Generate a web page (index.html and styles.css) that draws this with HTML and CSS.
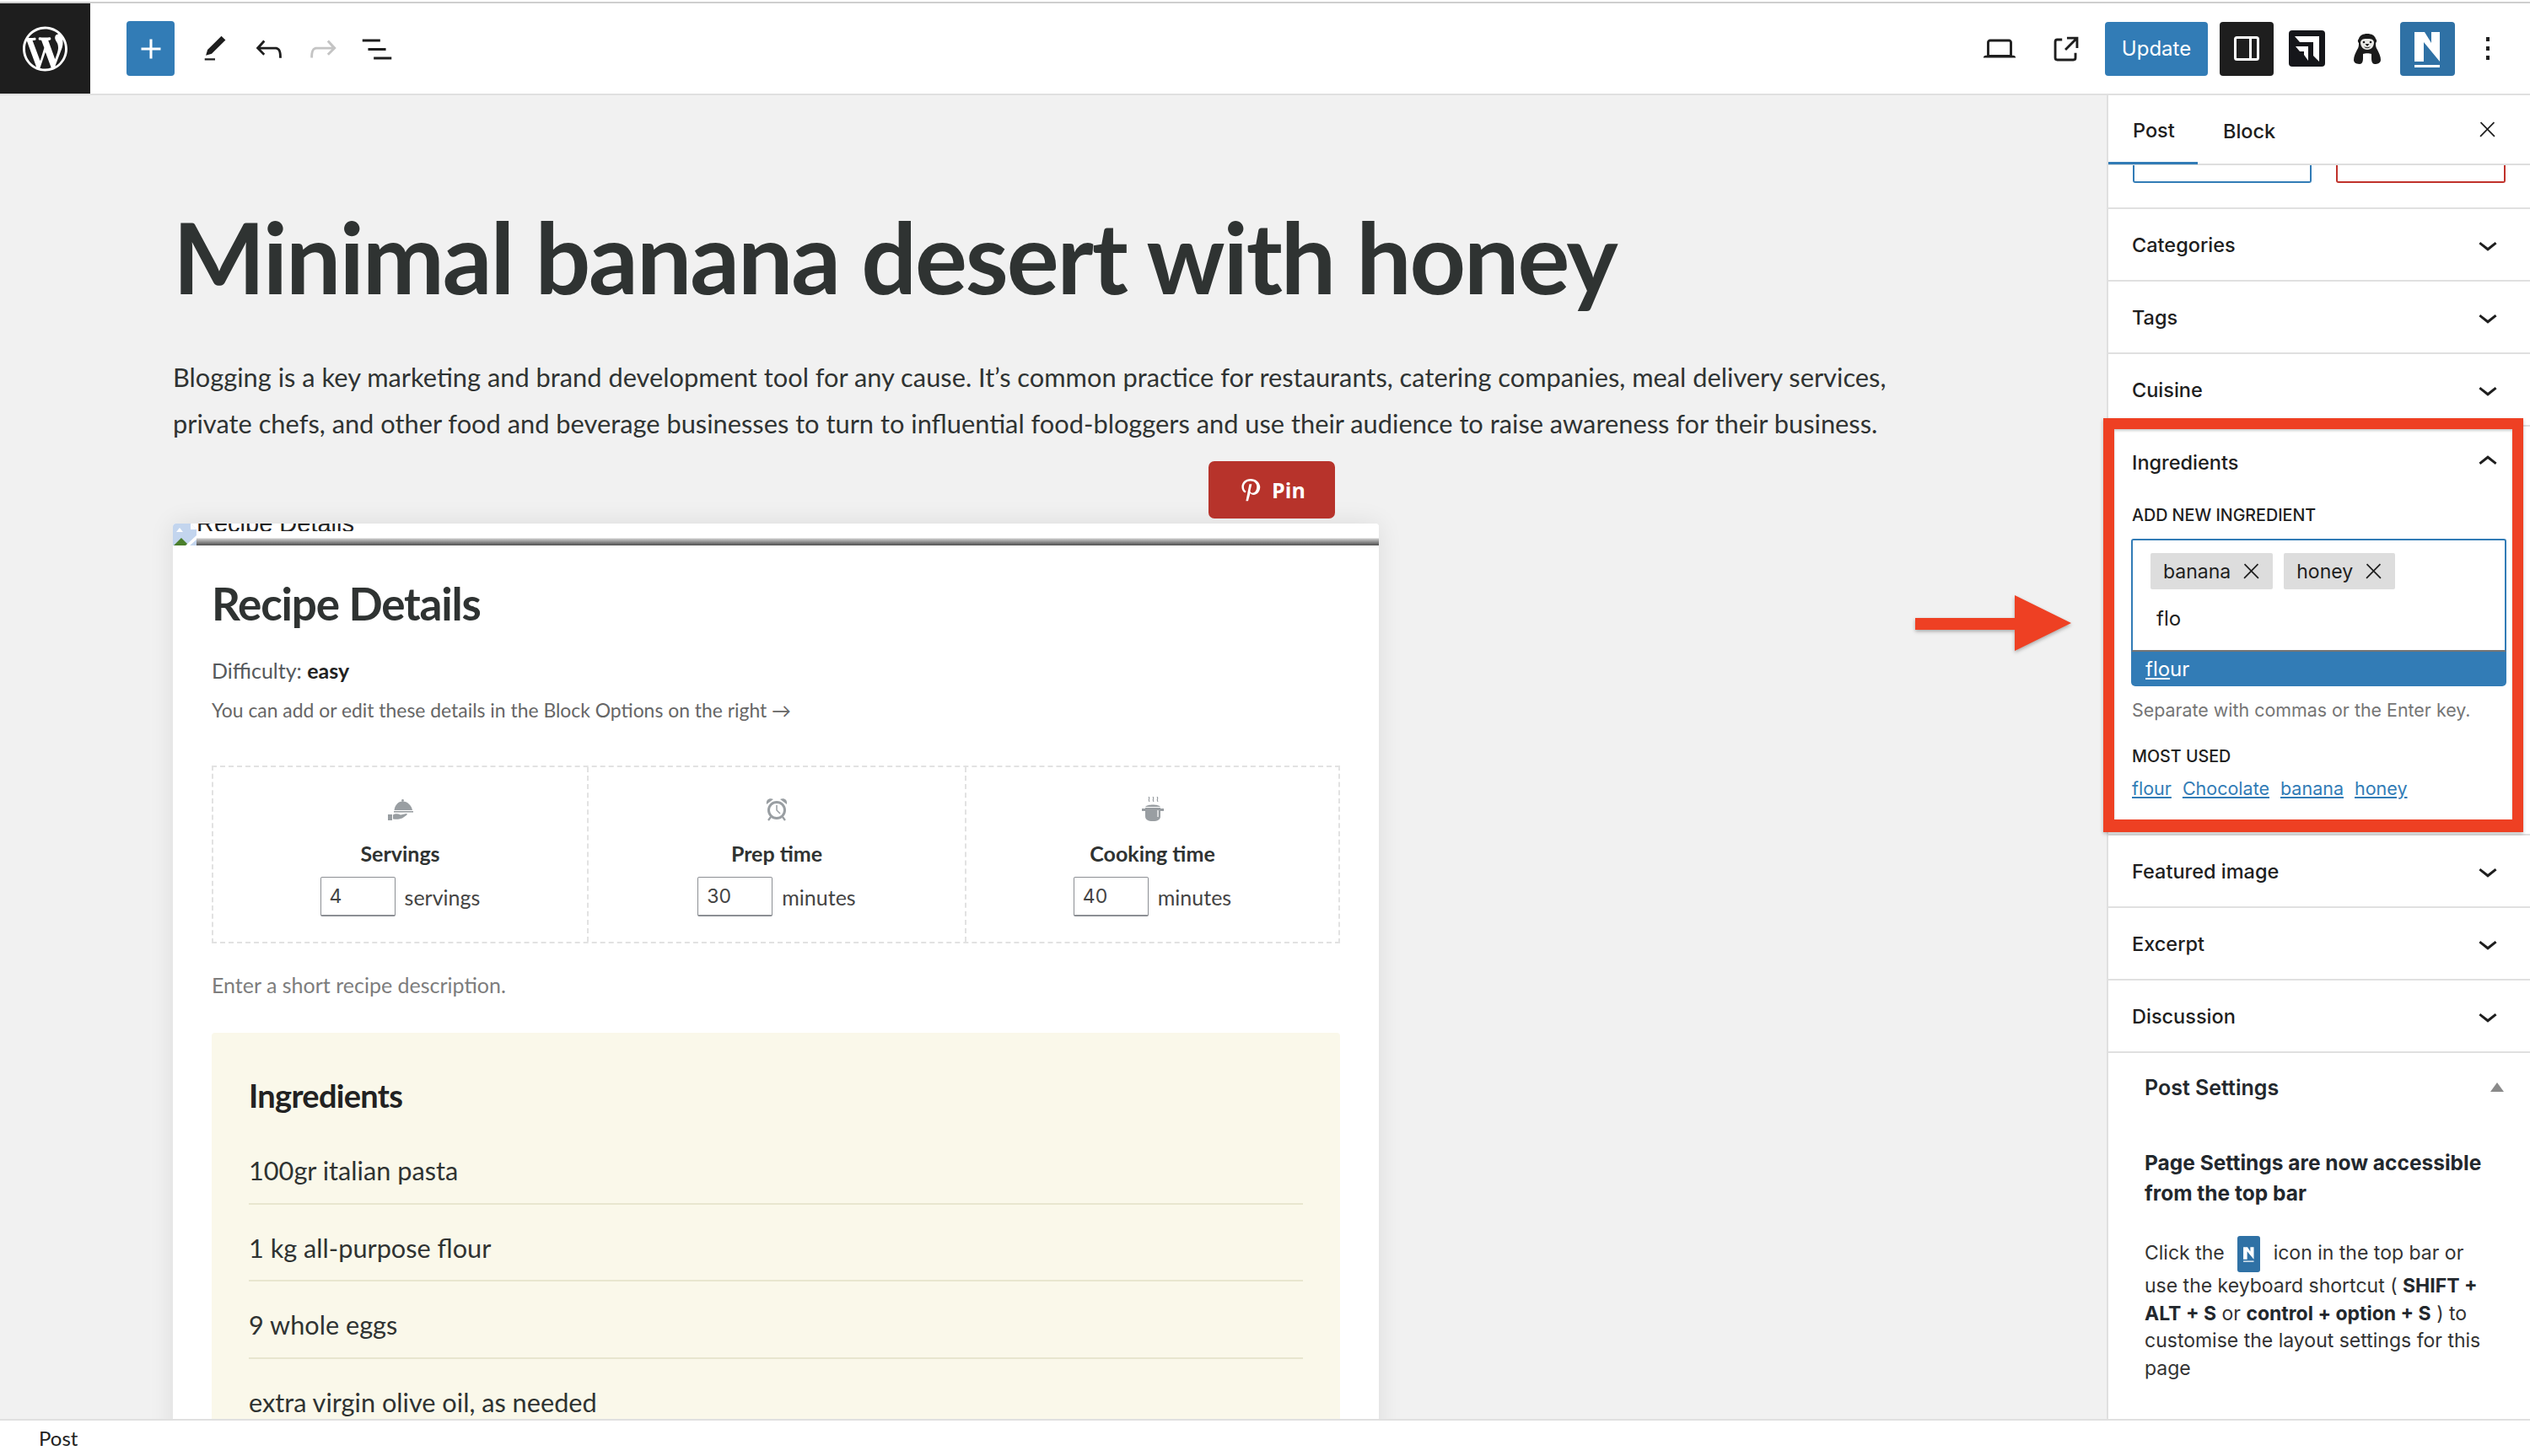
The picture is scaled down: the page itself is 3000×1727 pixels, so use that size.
FILE: index.html
```html
<!DOCTYPE html>
<html lang="en">
<head>
    <meta charset="UTF-8">
    <title>Edit Post - Minimal banana desert with honey</title>
    <link rel="stylesheet" href="styles.css">
</head>
<body>
    <svg class="sprite" xmlns="http://www.w3.org/2000/svg">
        <symbol id="i-plus" viewBox="0 0 24 24"><path d="M18 11.2h-5.2V6h-1.6v5.2H6v1.6h5.2V18h1.6v-5.2H18z"/></symbol>
        <symbol id="i-edit" viewBox="-3 -3 30 30"><path d="M20.1 5.1L16.9 2 6.2 12.7l-1.3 4.4 4.5-1.3L20.1 5.1zM4 20.8h8v-1.5H4v1.5z"/></symbol>
        <symbol id="i-undo" viewBox="0 0 24 24"><path d="M18.3 11.7c-.6-.6-1.4-.9-2.3-.9H6.7l2.9-3.3-1.1-1-4.5 5L8.5 16l1-1-2.7-2.7H16c.5 0 .9.2 1.3.5 1 1 1 3.4 1 4.5v.3h1.5v-.2c0-1.5 0-4.3-1.5-5.7z"/></symbol>
        <symbol id="i-redo" viewBox="0 0 24 24"><path d="M15.6 6.5l-1.1 1 2.9 3.3H8c-.9 0-1.7.3-2.3.9-1.4 1.5-1.4 4.2-1.4 5.6v.2h1.5v-.3c0-1.1 0-3.5 1-4.5.3-.3.7-.5 1.3-.5h9.2L14.5 15l1.1 1.1 4.6-4.6-4.6-5z"/></symbol>
        <symbol id="i-list" viewBox="0 0 24 24"><path d="M3 6h11v1.5H3V6zm3.5 5.5h11V13h-11v-1.5zM21 17H10v1.5h11V17z"/></symbol>
        <symbol id="i-laptop" viewBox="0 0 24 24"><path d="M20.5 16h-.7V8c0-1.1-.9-2-2-2H6.2c-1.1 0-2 .9-2 2v8h-.7c-.8 0-1.5.7-1.5 1.5h20c0-.8-.7-1.5-1.5-1.5zM5.7 8c0-.3.2-.5.5-.5h11.6c.3 0 .5.2.5.5v7.6H5.7V8z"/></symbol>
        <symbol id="i-external" viewBox="0 0 24 24"><path d="M19.5 4.5h-7V6h4.44l-5.97 5.97 1.06 1.06L18 7.06v4.44h1.5v-7Zm-13 1a2 2 0 0 0-2 2v10a2 2 0 0 0 2 2h10a2 2 0 0 0 2-2v-3H17v3a.5.5 0 0 1-.5.5h-10a.5.5 0 0 1-.5-.5v-10a.5.5 0 0 1 .5-.5h3V5.5h-3Z"/></symbol>
        <symbol id="i-close" viewBox="0 0 24 24"><path d="M13 11.8l6.1-6.3-1-1-6.1 6.2-6.1-6.2-1 1 6.1 6.3-6.5 6.7 1 1 6.5-6.6 6.5 6.6 1-1z"/></symbol>
        <symbol id="i-down" viewBox="0 0 24 24"><path d="M17.5 11.6L12 16l-5.5-4.4.9-1.2L12 14l4.5-3.6 1 1.2z"/></symbol>
        <symbol id="i-up" viewBox="0 0 24 24"><path d="M6.5 12.4L12 8l5.5 4.4-.9 1.2L12 10l-4.5 3.6-1-1.2z"/></symbol>
        <symbol id="i-n" viewBox="0 0 65 64"><path d="M17 12H29L37 25V12H47V47L28 24V47H17ZM17 51H47V54H17Z"/></symbol>
    </svg>

    <div class="topline"></div>
    <header class="topbar">
        <a class="wp-logo" href="#">
            <svg viewBox="0 0 20 20"><path d="M20 10c0-5.51-4.49-10-10-10C4.48 0 0 4.49 0 10c0 5.52 4.48 10 10 10 5.51 0 10-4.48 10-10zM7.78 15.37L4.37 6.22c.55-.02 1.17-.08 1.17-.08.5-.06.44-1.13-.06-1.11 0 0-1.45.11-2.37.11-.18 0-.37 0-.58-.01C4.12 2.69 6.87 1.11 10 1.11c2.33 0 4.45.87 6.05 2.34-.68-.11-1.65.39-1.65 1.58 0 .74.45 1.36.9 2.1.35.61.55 1.36.55 2.46 0 1.49-1.4 5-1.4 5l-3.03-8.37c.54-.02.82-.17.82-.17.5-.05.44-1.25-.06-1.22 0 0-1.44.12-2.38.12-.87 0-2.33-.12-2.33-.12-.5-.03-.56 1.2-.06 1.22l.92.08 1.26 3.41zM17.41 10c.24-.64.74-1.87.43-4.25.7 1.29 1.05 2.71 1.05 4.25 0 3.29-1.73 6.24-4.4 7.78.97-2.59 1.94-5.2 2.92-7.78zM6.1 18.09C3.12 16.65 1.11 13.53 1.11 10c0-1.3.23-2.48.72-3.59C3.25 10.3 4.67 14.2 6.1 18.09zm4.03-6.63l2.58 6.98c-.86.29-1.76.45-2.71.45-.79 0-1.57-.11-2.29-.33.81-2.38 1.62-4.74 2.42-7.1z"/></svg>
        </a>
        <div class="tools-left">
            <button class="add-btn"><svg class="icon"><use href="#i-plus"/></svg></button>
            <svg class="icon tool"><use href="#i-edit"/></svg>
            <svg class="icon tool"><use href="#i-undo"/></svg>
            <svg class="icon tool muted"><use href="#i-redo"/></svg>
            <svg class="icon tool"><use href="#i-list"/></svg>
        </div>
        <div class="tools-right">
            <svg class="icon tool"><use href="#i-laptop"/></svg>
            <svg class="icon tool"><use href="#i-external"/></svg>
            <button class="update-btn">Update</button>
            <button class="panel-btn">
                <svg viewBox="0 0 30 30"><rect x="1.5" y="1.5" width="27" height="26" rx="2" fill="none" stroke="#fff" stroke-width="3"/><rect x="18" y="2" width="3" height="26" fill="#fff"/></svg>
            </button>
            <div class="logo-arrow">
                <svg viewBox="0 0 43 43"><path d="M7 7H36V37L29 30V14H13ZM8 19H23V36L18 29V25H13Z" fill="#fff"/></svg>
            </div>
            <svg class="logo-penguin" viewBox="0 0 32 36">
                <path d="M16 0C11 0 7 2 6 6C4 8 5 10 6 11C6 14 6 16 4 19C2 23 0 27 0 31C0 35 4 36 7 36C10 36 11 33 11 29V24C13 23 19 23 21 24V29C21 33 22 36 25 36C28 36 32 35 32 31C32 27 30 23 28 19C26 16 26 14 26 11C27 10 28 8 26 6C25 2 21 0 16 0Z" fill="#1b1b1b"/>
                <path d="M16 6C12 6 9 6 8 10C8 15 11 19 16 19C21 19 24 15 24 10C23 6 20 6 16 6Z" fill="#e9e9e6"/>
                <circle cx="12" cy="10" r="1.300" fill="#1b1b1b"/><circle cx="20" cy="10" r="1.300" fill="#1b1b1b"/>
                <path d="M13.500 12H18.500L16 15ZM12 15C14 18 18 18 20 15C18 16.500 14 16.500 12 15Z" fill="#1b1b1b"/>
            </svg>
            <div class="logo-n"><svg viewBox="0 0 65 64"><use href="#i-n"/></svg></div>
            <div class="more-dots"><span></span><span></span><span></span></div>
        </div>
    </header>

    <div class="workspace">
        <main class="editor">
            <h1 class="post-title">Minimal banana desert with honey</h1>
            <p class="post-intro">Blogging is a key marketing and brand development tool for any cause. It’s common practice for restaurants, catering companies, meal delivery services, private chefs, and other food and beverage businesses to turn to influential food-bloggers and use their audience to raise awareness for their business.</p>

            <div class="pin-row">
                <a class="pin-btn" href="#">
                    <svg viewBox="0 0 24 24"><path d="M12 1.5C6.8 1.5 3.5 5 3.5 9.2c0 2.6 1.2 4.7 3.2 5.6l1-1.5c-1.5-.9-2.2-2.300-2.200-4.100 0-3 2.500-5.700 6.400-5.700 3.600 0 5.900 2.300 5.900 5.400 0 3.500-1.800 6-4.200 6-1.300 0-2.100-1-2-2.200l1.500-6.200H10.700L7.500 22.500h2.100l2-7.300c.8 1 2 1.500 3.100 1.500 3.900 0 6.300-3.500 6.300-7.700C20.500 4.800 17 1.500 12 1.500z" fill="#fff"/></svg>
                    Pin
                </a>
            </div>

            <article class="recipe-card">
                <div class="broken-image">
                    <svg class="broken-icon" viewBox="0 0 28 27">
                        <path d="M1 0H21L28 7V27H0V2Z" fill="#c3d5ee"/>
                        <path d="M0 27L10 17L20 27Z" fill="#4a7f2c"/>
                        <path d="M21 0L28 7H21Z" fill="#fff"/>
                        <path d="M28 14L14 27H19L28 19Z" fill="#fff"/>
                        <path d="M8 5L12 10H4Z" fill="#fff"/>
                    </svg>
                    <span class="broken-alt">Recipe Details</span>
                </div>
                <div class="recipe-body">
                    <h2 class="recipe-title">Recipe Details</h2>
                    <p class="difficulty">Difficulty: <strong>easy</strong></p>
                    <p class="hint">You can add or edit these details in the Block Options on the right →</p>

                    <div class="facts">
                        <div class="fact">
                            <svg class="fact-icon" viewBox="0 0 30 30">
                                <circle cx="17.500" cy="4.500" r="1.400"/>
                                <path d="M7.500 16C8 10.500 12 5.500 17.500 5.500C23 5.500 28 10.500 29 16Z"/>
                                <path d="M7 17H30V18.600H7Z"/>
                                <path d="M0 21H5V28H0ZM6 21.500C9 19.500 12 20.500 15 21.500L22 20C23 20 23 21 22 22L17 25.500C13 27 10 27 6 26.500Z"/>
                            </svg>
                            <div class="fact-label">Servings</div>
                            <div class="fact-input"><input class="num-input" type="text" value="4"><span>servings</span></div>
                        </div>
                        <div class="fact">
                            <svg class="fact-icon" viewBox="0 0 30 30">
                                <circle cx="15" cy="16" r="9.500" fill="none" stroke="#999ea2" stroke-width="3"/>
                                <path d="M3 9C2 4 6 1 11 3ZM27 9C28 4 24 1 19 3Z"/>
                                <path d="M15 10V16L19 20" fill="none" stroke="#999ea2" stroke-width="1.500"/>
                                <path d="M8 24L5 28M22 24L25 28" fill="none" stroke="#999ea2" stroke-width="2.200"/>
                            </svg>
                            <div class="fact-label">Prep time</div>
                            <div class="fact-input"><input class="num-input" type="text" value="30"><span>minutes</span></div>
                        </div>
                        <div class="fact">
                            <svg class="fact-icon" viewBox="0 0 30 30">
                                <path d="M6 13H24V23C24 27 21 29 15 29C9 29 6 27 6 23Z"/>
                                <path d="M6 12C8 8.500 22 8.500 24 12Z"/>
                                <path d="M2 14H6V17H2ZM24 14H28V17H24Z"/>
                                <path d="M10 0C12 2 9 3 11 6M15 0C17 2 14 3 16 6M20 0C22 2 19 3 21 6" fill="none" stroke="#999ea2" stroke-width="1.200"/>
                                <path d="M21 16V24" fill="none" stroke="#fff" stroke-width="1.200"/>
                            </svg>
                            <div class="fact-label">Cooking time</div>
                            <div class="fact-input"><input class="num-input" type="text" value="40"><span>minutes</span></div>
                        </div>
                    </div>

                    <p class="short-desc">Enter a short recipe description.</p>

                    <section class="ingredients">
                        <h3>Ingredients</h3>
                        <ul>
                            <li>100gr italian pasta</li>
                            <li>1 kg all-purpose flour</li>
                            <li>9 whole eggs</li>
                            <li>extra virgin olive oil, as needed</li>
                        </ul>
                    </section>
                </div>
            </article>
        </main>

        <aside class="sidebar">
            <div class="side-tabs">
                <span class="tab active">Post</span>
                <span class="tab">Block</span>
                <svg class="icon close"><use href="#i-close"/></svg>
            </div>
            <div class="side-scroll">
                <div class="cut-buttons"><span class="cut-blue"></span><span class="cut-red"></span></div>
                <div class="panel-row">Categories<svg class="icon"><use href="#i-down"/></svg></div>
                <div class="panel-row">Tags<svg class="icon"><use href="#i-down"/></svg></div>
                <div class="panel-row">Cuisine<svg class="icon"><use href="#i-down"/></svg></div>

                <div class="panel-open">
                    <div class="panel-head">Ingredients<svg class="icon"><use href="#i-up"/></svg></div>
                    <div class="field-title">ADD NEW INGREDIENT</div>
                    <div class="token-box">
                        <div class="token-field">
                            <div class="chips">
                                <span class="chip">banana<svg class="icon"><use href="#i-close"/></svg></span>
                                <span class="chip">honey<svg class="icon"><use href="#i-close"/></svg></span>
                            </div>
                            <div class="typed">flo</div>
                        </div>
                        <div class="suggestion"><u>flo</u>ur</div>
                    </div>
                    <p class="help">Separate with commas or the Enter key.</p>
                    <div class="field-title used">MOST USED</div>
                    <div class="used-links"><a href="#">flour</a><a href="#">Chocolate</a><a href="#">banana</a><a href="#">honey</a></div>
                </div>

                <div class="panel-row">Featured image<svg class="icon"><use href="#i-down"/></svg></div>
                <div class="panel-row">Excerpt<svg class="icon"><use href="#i-down"/></svg></div>
                <div class="panel-row">Discussion<svg class="icon"><use href="#i-down"/></svg></div>

                <div class="post-settings">
                    <div class="settings-head">Post Settings<span class="caret-up"></span></div>
                    <p class="settings-lead">Page Settings are now accessible from the top bar</p>
                    <p class="settings-text">Click the <span class="inline-n"><svg viewBox="0 0 65 64"><use href="#i-n"/></svg></span> icon in the top bar or use the keyboard shortcut ( <b>SHIFT + ALT + S</b> or <b>control + option + S</b> ) to customise the layout settings for this page</p>
                </div>
            </div>
        </aside>
    </div>

    <footer class="statusbar">Post</footer>

    <!-- annotation added on top of the screenshot -->
    <div class="callout-box"></div>
    <svg class="callout-arrow" viewBox="0 0 185 66"><path d="M0 27H118V0L185 33L118 66V41H0Z" fill="#ee4023"/></svg>
</body>
</html>
```

FILE: styles.css
```css
* {
    box-sizing: border-box;
}

html, body {
    height: 100%;
}

body {
    margin: 0;
    display: flex;
    flex-direction: column;
    height: 1727px;
    overflow: hidden;
    font-family: "Inter", "Liberation Sans", sans-serif;
    color: #1e1e1e;
    background: #fff;
}

.sprite {
    display: none;
}

.icon {
    display: block;
    width: 46px;
    height: 46px;
    fill: #1e1e1e;
    flex: none;
}

/* top bar */
.topline {
    height: 4px;
    border-bottom: 2px solid #cfcfcf;
    flex: none;
}

.topbar {
    display: flex;
    align-items: center;
    height: 109px;
    flex: none;
    background: #fff;
    border-bottom: 2px solid #e0e0e0;
}

.wp-logo {
    width: 107px;
    height: 107px;
    background: #1e1e1e;
    display: flex;
    align-items: center;
    justify-content: center;
    flex: none;
}

.wp-logo svg {
    width: 53px;
    height: 54px;
    fill: #fff;
}

.tools-left {
    display: flex;
    align-items: center;
    margin-left: 43px;
    gap: 18px;
}

.tools-left .add-btn {
    margin-right: 7px;
}

.add-btn {
    width: 57px;
    height: 65px;
    padding: 0;
    border: 0;
    border-radius: 4px;
    background: #327cb6;
    display: flex;
    align-items: center;
    justify-content: center;
}

.add-btn .icon {
    fill: #fff;
}

.tool {
    margin: 0;
}

.tool.muted {
    fill: #c4c4c4;
}

.tools-right {
    display: flex;
    align-items: center;
    margin-left: auto;
}

.tools-right .tool:nth-child(1) {
    margin-right: 33px;
}

.tools-right .tool:nth-child(2) {
    margin-right: 23px;
}

.update-btn {
    width: 122px;
    height: 64px;
    border: 0;
    border-radius: 4px;
    background: #327cb6;
    color: #fff;
    font-family: "Inter", "Liberation Sans", sans-serif;
    font-size: 24px;
    padding: 0;
}

.panel-btn {
    width: 64px;
    height: 64px;
    margin-left: 14px;
    padding: 0;
    border: 0;
    border-radius: 4px;
    background: #1e1e1e;
    display: flex;
    align-items: center;
    justify-content: center;
}

.panel-btn svg {
    width: 30px;
    height: 30px;
}

.logo-arrow {
    width: 43px;
    height: 43px;
    margin-left: 18px;
    border-radius: 4px;
    background: #15161a;
}

.logo-arrow svg {
    display: block;
    width: 43px;
    height: 43px;
}

.logo-penguin {
    width: 32px;
    height: 36px;
    margin-left: 34px;
}

.logo-n {
    width: 65px;
    height: 64px;
    margin-left: 23px;
    border-radius: 4px;
    background: #2f71a5;
}

.logo-n svg {
    display: block;
    width: 65px;
    height: 64px;
    fill: #fff;
}

.more-dots {
    display: flex;
    flex-direction: column;
    gap: 6px;
    margin-left: 37px;
    margin-right: 48px;
}

.more-dots span {
    display: block;
    width: 4px;
    height: 5px;
    background: #1e1e1e;
}

/* main area */
.workspace {
    flex: 1;
    display: flex;
    min-height: 0;
}

.editor {
    flex: 1;
    min-width: 0;
    overflow: hidden;
    background: #f1f1f1;
    padding: 0 205px;
    font-family: "Lato", "Noto Sans", sans-serif;
}

.post-title {
    margin: 119px 0 0;
    font-size: 116px;
    line-height: 146px;
    font-weight: 700;
    color: #2f3332;
    letter-spacing: -2.1px;
    white-space: nowrap;
}

.post-intro {
    margin: 42px 0 0;
    width: 2080px;
    font-size: 30.8px;
    line-height: 55px;
    color: #2f3332;
}

.pin-row {
    display: flex;
    justify-content: flex-start;
    margin-top: 17px;
    padding-left: 1228px;
}

.pin-btn {
    width: 150px;
    height: 68px;
    border-radius: 7px;
    background: #b7332b;
    color: #fff;
    font-family: "Open Sans", sans-serif;
    font-size: 25px;
    font-weight: 700;
    text-decoration: none;
    display: flex;
    align-items: center;
    justify-content: center;
    gap: 10px;
}

.pin-btn svg {
    width: 30px;
    height: 30px;
}

.recipe-card {
    width: 1430px;
    margin-top: 6px;
    background: #fff;
    border-radius: 4px 4px 0 0;
    box-shadow: 0 0 30px rgba(0, 0, 0, 0.09);
}

.broken-image {
    position: relative;
    height: 26px;
    overflow: hidden;
    display: flex;
    background: linear-gradient(#fff 0, #fff 17px, #c9c9c9 18px, #5c5c5c 25px);
    border-radius: 4px 4px 0 0;
}

.broken-icon {
    width: 28px;
    height: 27px;
    flex: none;
}

.broken-alt {
    font-family: "Liberation Sans", sans-serif;
    font-size: 29px;
    line-height: 18px;
    height: 18px;
    color: #222;
    overflow: hidden;
    white-space: nowrap;
    margin-top: -9px;
    padding-top: 0;
}

.recipe-body {
    padding: 0 46px 0 46px;
}

.recipe-title {
    margin: 34px 0 0;
    font-size: 53px;
    line-height: 70px;
    font-weight: 700;
    color: #2f3332;
    letter-spacing: -1.2px;
}

.difficulty {
    margin: 27px 0 0;
    font-size: 25px;
    line-height: 34px;
    color: #55595c;
}

.difficulty strong {
    color: #222;
}

.hint {
    margin: 13px 0 0;
    font-size: 22.9px;
    line-height: 34px;
    color: #666;
}

.facts {
    display: grid;
    grid-template-columns: 443px 448px 1fr;
    height: 211px;
    margin-top: 49px;
    border: 2px dashed #e2e2e2;
}

.fact {
    display: flex;
    flex-direction: column;
    align-items: center;
    border-left: 2px dashed #e2e2e2;
    padding-top: 35px;
}

.fact:first-child {
    border-left: 0;
}

.fact-icon {
    width: 30px;
    height: 30px;
    fill: #999ea2;
}

.fact-label {
    margin-top: 20px;
    font-size: 25px;
    line-height: 34px;
    font-weight: 700;
    color: #2f3332;
}

.fact-input {
    display: flex;
    align-items: center;
    gap: 11px;
    margin-top: 11px;
    font-size: 25px;
    color: #444;
}

.num-input {
    width: 89px;
    height: 47px;
    padding: 0 10px;
    border: 1px solid #8c8f94;
    border-bottom-width: 2px;
    border-radius: 2px;
    font-family: "Inter", "Liberation Sans", sans-serif;
    font-size: 23px;
    color: #444;
    background: #fff;
}

.short-desc {
    margin: 32px 0 0;
    font-size: 25px;
    line-height: 34px;
    color: #7d7d7d;
}

.ingredients {
    margin-top: 40px;
    padding: 46px 44px 0;
    background: #faf8ea;
    border-radius: 4px 4px 0 0;
    height: 600px;
}

.ingredients h3 {
    margin: 0;
    font-size: 38px;
    line-height: 56px;
    font-weight: 700;
    letter-spacing: -0.7px;
    color: #222;
}

.ingredients ul {
    list-style: none;
    margin: 10px 0 0;
    padding: 0;
}

.ingredients li {
    height: 91.5px;
    padding-top: 29px;
    font-size: 30.7px;
    line-height: 46px;
    color: #2f3332;
    border-bottom: 2px solid #e8e6cf;
}

/* right sidebar */
.sidebar {
    width: 502px;
    flex: none;
    border-left: 2px solid #e0e0e0;
    background: #fff;
    display: flex;
    flex-direction: column;
    min-height: 0;
}

.side-tabs {
    display: flex;
    align-items: center;
    height: 83px;
    flex: none;
    position: relative;
    border-bottom: 2px solid #dedede;
    font-size: 24px;
    font-weight: 500;
}

.tab {
    display: flex;
    align-items: center;
    height: 83px;
    padding: 4px 29px 0;
    color: #1e1e1e;
    font-weight: 500;
    font-size: 23.5px;
}

.tab.active {
    width: 106px;
    border-bottom: 3px solid #327cb6;
}

.tab + .tab {
    padding-left: 30px;
}

.close {
    width: 29px;
    height: 29px;
    margin-left: auto;
    margin-right: 36px;
}

.side-scroll {
    flex: 1;
    overflow: hidden;
}

.cut-buttons {
    display: flex;
    gap: 29px;
    height: 52px;
    padding-left: 29px;
    border-bottom: 2px solid #e0e0e0;
}

.cut-blue, .cut-red {
    display: block;
    height: 21px;
    border: 2px solid #327cb6;
    border-top: 0;
    border-radius: 0 0 3px 3px;
    width: 212px;
}

.cut-red {
    width: 201px;
    border-color: #c0322b;
}

.panel-row, .panel-head, .settings-head {
    display: flex;
    align-items: center;
    justify-content: space-between;
    font-size: 23.5px;
    font-weight: 500;
    color: #1e1e1e;
}

.panel-row {
    height: 86px;
    padding: 0 27px 0 28px;
    border-bottom: 2px solid #e0e0e0;
}

.panel-open {
    height: 485px;
    padding: 0 28px 0 28px;
    border-bottom: 2px solid #e0e0e0;
}

.panel-head {
    height: 84px;
    margin-right: -1px;
}

.field-title {
    font-size: 19.7px;
    line-height: 28px;
    font-weight: 500;
    margin-top: 7px;
}

.token-box {
    margin-top: 14px;
    width: 445px;
    margin-left: -1px;
}

.token-field {
    height: 134px;
    border: 2px solid #327cb6;
    border-bottom: 2px solid #757575;
    border-radius: 3px 3px 0 0;
    padding: 15px 21px;
}

.chips {
    display: flex;
    gap: 13px;
}

.chip {
    display: flex;
    align-items: center;
    height: 43px;
    padding: 0 11px 0 15px;
    background: #dddddd;
    border-radius: 2px;
    font-size: 23px;
}

.chip .icon {
    width: 29px;
    height: 29px;
    margin-left: 10px;
}

.typed {
    margin-top: 17px;
    padding-left: 7px;
    font-size: 24px;
    line-height: 36px;
}

.suggestion {
    height: 41px;
    padding-left: 17px;
    background: #327cb6;
    border-radius: 0 0 5px 5px;
    color: #fff;
    font-size: 24px;
    line-height: 41px;
}

.help {
    margin: 14px 0 0;
    font-size: 21.4px;
    line-height: 28px;
    color: #757575;
}

.field-title.used {
    margin-top: 27px;
}

.used-links {
    display: flex;
    gap: 13px;
    margin-top: 10px;
    font-size: 21.5px;
    line-height: 28px;
}

.used-links a {
    color: #327cb6;
}

.post-settings {
    padding: 0 28px 0 43px;
}

.settings-head {
    height: 81px;
    font-weight: 600;
    font-size: 25px;
    color: #23282d;
}

.caret-up {
    width: 0;
    height: 0;
    margin-right: 3px;
    border: 8px solid transparent;
    border-top: 0;
    border-bottom: 11px solid #8a8a8a;
}

.settings-lead {
    margin: 31px 0 0;
    font-size: 24.5px;
    line-height: 36px;
    font-weight: 700;
    color: #23282d;
}

.settings-text {
    margin: 33px 0 0;
    padding-right: 20px;
    font-size: 23px;
    line-height: 32.5px;
    color: #333;
}

.settings-text b {
    color: #23282d;
}

.inline-n {
    display: inline-block;
    width: 27px;
    height: 43px;
    margin: 0 9px;
    vertical-align: middle;
    background: #2f71a5;
    border-radius: 3px;
}

.inline-n svg {
    display: block;
    width: 27px;
    height: 43px;
    fill: #fff;
}

/* status bar */
.statusbar {
    height: 44px;
    flex: none;
    padding: 0 46px;
    border-top: 2px solid #e0e0e0;
    background: #fff;
    font-family: "Lato", sans-serif;
    font-size: 24px;
    line-height: 42px;
    color: #222;
}

/* red annotation */
.callout-box {
    position: absolute;
    left: 2494px;
    top: 496px;
    width: 498px;
    height: 491px;
    border: 13px solid #ee4023;
    border-bottom-width: 15px;
    box-shadow: 0 2px 4px rgba(0, 0, 0, 0.25), inset 0 2px 3px rgba(0, 0, 0, 0.2);
}

.callout-arrow {
    position: absolute;
    left: 2271px;
    top: 706px;
    width: 185px;
    height: 66px;
    filter: drop-shadow(0 2px 2px rgba(0, 0, 0, 0.3));
}
```
